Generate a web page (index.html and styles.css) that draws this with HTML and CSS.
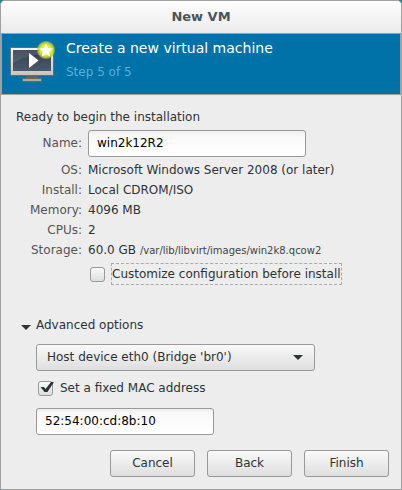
FILE: index.html
```html
<!DOCTYPE html>
<html lang="en">
<head>
<meta charset="utf-8">
<title>New VM</title>
<link rel="stylesheet" href="styles.css">
</head>
<body>
<form class="dialog">
  <h1 class="titlebar">New VM</h1>
  <header class="banner">
    <svg class="banner-icon" width="48" height="48" viewBox="0 0 48 48" aria-hidden="true">
      <defs>
        <linearGradient id="frame" x1="0" y1="0" x2="0" y2="1">
          <stop offset="0" stop-color="#f4f4f4"/><stop offset="1" stop-color="#c4c4c2"/>
        </linearGradient>
        <linearGradient id="screen" x1="0" y1="0" x2="0" y2="1">
          <stop offset="0" stop-color="#353f50"/><stop offset="1" stop-color="#4c586d"/>
        </linearGradient>
        <radialGradient id="glow">
          <stop offset="0" stop-color="#f4f26a"/><stop offset=".6" stop-color="#e2e52a"/>
          <stop offset=".85" stop-color="#b4cc38" stop-opacity=".8"/><stop offset="1" stop-color="#8fb850" stop-opacity="0"/>
        </radialGradient>
      </defs>
      <path d="M16 37h12v4H16z" fill="#62625f"/>
      <rect x="12.500" y="40.500" width="19" height="3" rx="1" fill="#a9a9a6" stroke="#686865"/>
      <rect x=".5" y="9.500" width="43" height="28" rx="1" fill="url(#frame)" stroke="#6b6b69"/>
      <rect x="3" y="12" width="38" height="21" fill="url(#screen)"/>
      <path d="M3 12h38v3Q18 16 3 25z" fill="#fff" opacity=".1"/>
      <path d="M19 15v15l9.500-7.500z" fill="#fff"/>
      <circle cx="36" cy="12" r="9.500" fill="url(#glow)"/>
      <path d="M36 5.500l2 4.400 4.800.6-3.500 3.300.9 4.800-4.200-2.400-4.200 2.400.9-4.800-3.500-3.300 4.800-.6z" fill="#fff"/>
    </svg>
    <div class="banner-text">
      <h2>Create a new virtual machine</h2>
      <p>Step 5 of 5</p>
    </div>
  </header>
  <main class="content">
    <p class="intro">Ready to begin the installation</p>
    <div class="name-row">
      <label for="name">Name:</label>
      <input class="entry" id="name" type="text" value="win2k12R2">
    </div>
    <dl class="summary">
      <dt>OS:</dt><dd>Microsoft Windows Server 2008 (or later)</dd>
      <dt>Install:</dt><dd>Local CDROM/ISO</dd>
      <dt>Memory:</dt><dd>4096 MB</dd>
      <dt>CPUs:</dt><dd>2</dd>
      <dt>Storage:</dt><dd>60.0 GB <small>/var/lib/libvirt/images/win2k8.qcow2</small></dd>
    </dl>
    <label class="check customize"><input type="checkbox"><span class="focused">Customize configuration before install</span></label>
    <details class="advanced" open>
      <summary><svg width="10" height="6" viewBox="0 0 10 6" aria-hidden="true"><path d="M0 0h10L5 5z" fill="#2e3436"/></svg>Advanced options</summary>
      <div class="options">
        <div class="combo">
          <select aria-label="Network source"><option>Host device eth0 (Bridge 'br0')</option></select>
          <svg class="combo-arrow" width="10" height="5" viewBox="0 0 10 5" aria-hidden="true"><path d="M0 0h10L5 5z" fill="#2e3436"/></svg>
        </div>
        <label class="check"><input type="checkbox" checked><span>Set a fixed MAC address</span>
          <svg class="tick" width="14" height="12" viewBox="0 0 14 12" aria-hidden="true"><path d="M.5 6H4l1.500 2L11 1h3L7.500 11H4.500z" fill="#2e3436"/></svg>
        </label>
        <input class="entry mac" type="text" value="52:54:00:cd:8b:10" aria-label="MAC address">
      </div>
    </details>
  </main>
  <footer class="actions">
    <button type="button">Cancel</button>
    <button type="button">Back</button>
    <button type="button">Finish</button>
  </footer>
</form>
</body>
</html>
```
FILE: styles.css
```css
* { box-sizing: border-box; }

body {
  margin: 0;
  background: #2f8588;
  color: #2e3436;
  font: 12px/20px "DejaVu Sans", sans-serif;
}

h1, h2, p, dl, dd { margin: 0; }

input, select, button {
  margin: 0;
  font: inherit;
}

.dialog {
  display: flex;
  flex-direction: column;
  min-height: 100vh;
  border: 1px solid #a1a1a1;
  border-radius: 5px 5px 0 0;
  background: #ededed;
}

.titlebar {
  height: 32px;
  border-radius: 4px 4px 0 0;
  background: linear-gradient(#fefefe, #ebebeb);
  color: #4a555b;
  font-size: 13px;
  line-height: 31px;
  text-align: center;
}

.banner {
  display: flex;
  gap: 8px;
  height: 62px;
  padding: 4px 8px;
  border: 1px solid #a1a1a1;
  background: #0072a8;
}

.banner-icon { flex: none; }

.banner h2 {
  color: #fff;
  font-size: 14px;
  font-weight: normal;
  line-height: 20px;
}

.banner p {
  margin-top: 4px;
  color: #58aedb;
}

.content {
  padding: 12px 15px 0;
}

.name-row, .summary {
  display: grid;
  grid-template-columns: 66px 1fr;
  column-gap: 6px;
}

.name-row {
  align-items: center;
  margin-top: 3px;
}

.name-row label, .summary dt {
  color: #555;
  text-align: right;
}

.name-row label { padding-bottom: 2px; }

.summary { margin-top: 3px; }

.summary small {
  color: #444;
  font-size: 10px;
}

.entry {
  width: 218px;
  height: 27px;
  padding: 0 8px 2px;
  border: 1px solid #999;
  border-radius: 3px;
  background: linear-gradient(#eee, #f8f8f8 4px, #fff);
  color: #000;
}

.check {
  position: relative;
  display: flex;
  align-items: center;
  gap: 7px;
}

.check input {
  appearance: none;
  width: 15px;
  height: 15px;
  border: 1px solid #999;
  border-radius: 3px;
  background: linear-gradient(#fafafa, #dedede);
}

.customize {
  margin: 2px 0 0 74px;
  gap: 6px;
}

.focused {
  height: 22px;
  border: 1px dashed #aaa;
}

.tick {
  position: absolute;
  top: 3px;
  left: 4px;
}

.advanced { margin-top: 30px; }

.advanced summary {
  display: flex;
  align-items: center;
  gap: 5px;
  padding-left: 5px;
  list-style: none;
}

.advanced summary svg { margin-top: 5px; }

.options { padding-left: 20px; }

.combo {
  position: relative;
  width: 279px;
  margin: 9px 0 7px;
}

.combo select {
  display: block;
  appearance: none;
  width: 100%;
  padding: 0 10px;
}

.combo select, .actions button {
  height: 27px;
  padding-bottom: 2px;
  border: 1px solid #999;
  border-radius: 3px;
  background: linear-gradient(#fafafa, #dedede);
  color: #2e3436;
}

.combo-arrow {
  position: absolute;
  top: 11px;
  right: 12px;
}

.options .check { padding-left: 2px; }

.mac {
  display: block;
  width: 178px;
  margin-top: 10px;
}

.actions {
  display: flex;
  justify-content: flex-end;
  gap: 12px;
  margin-top: auto;
  padding: 12px;
}

.actions button {
  width: 85px;
  padding: 0 0 2px;
}
```
